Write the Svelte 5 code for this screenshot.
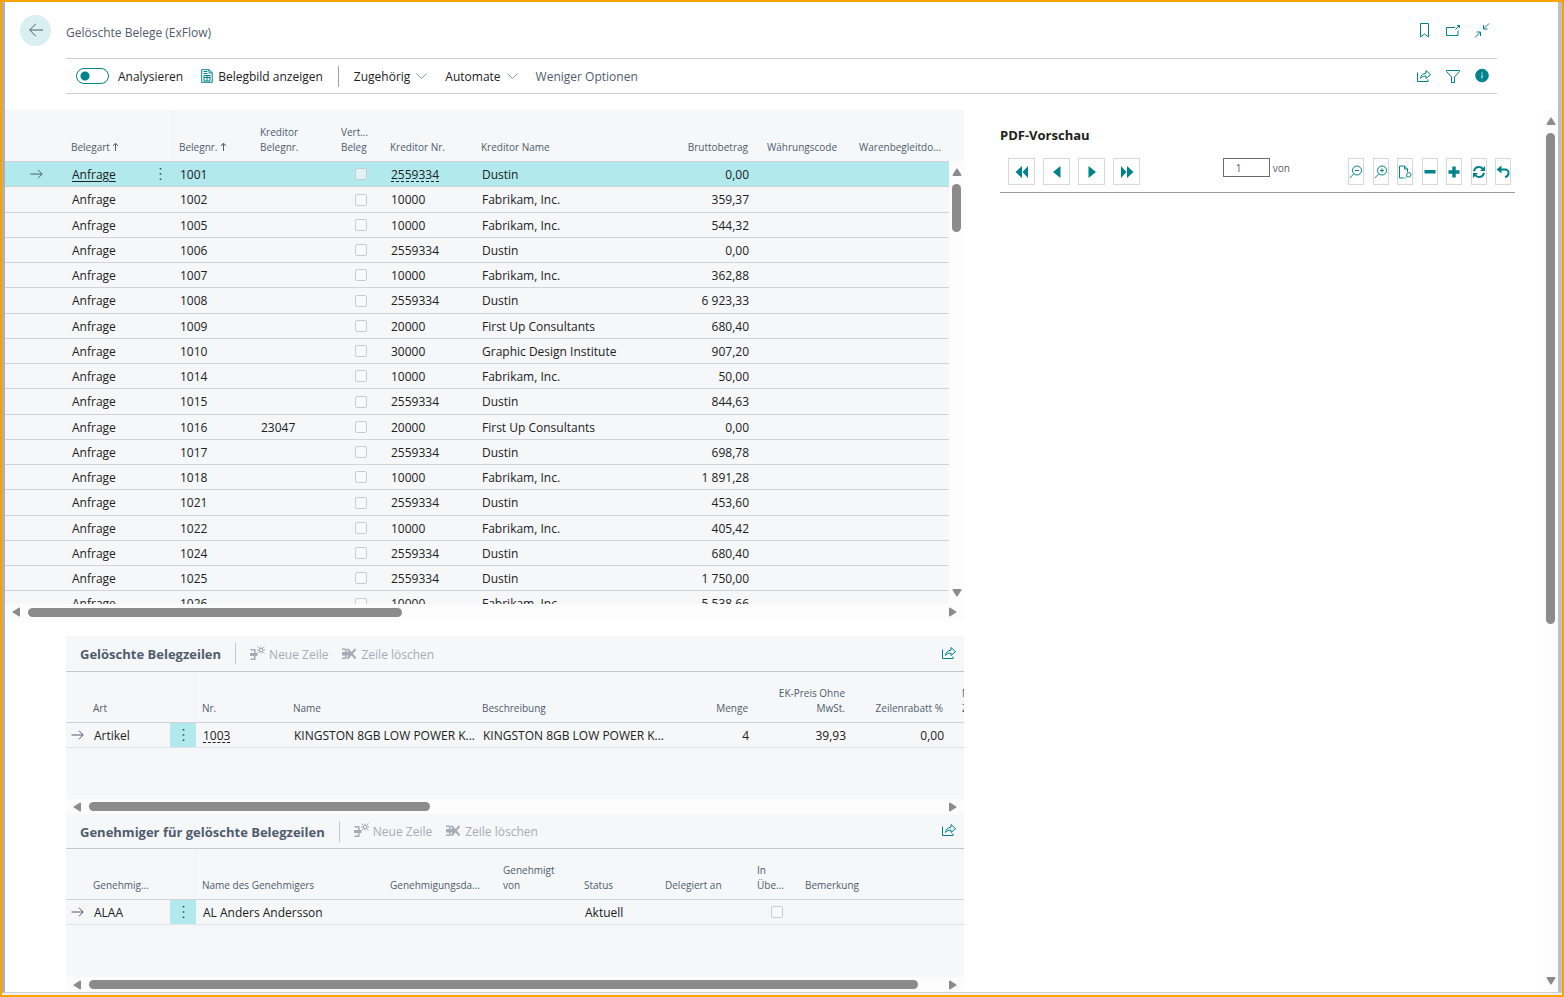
<script lang="ts">
  // Columns of the three lists. A width of 0 takes up the remaining space.
  const documentColumns = [
    { label: '', width: 60 },
    { label: 'Belegart', width: 82, sorted: true },
    { label: '', width: 26 },
    { label: 'Belegnr.', width: 81, sorted: true },
    { label: 'Kreditor\nBelegnr.', width: 81 },
    { label: 'Vert...\nBeleg', width: 49 },
    { label: 'Kreditor Nr.', width: 91 },
    { label: 'Kreditor Name', width: 190 },
    { label: 'Bruttobetrag', width: 96, right: true },
    { label: 'Währungscode', width: 92 },
    { label: 'Warenbegleitdo...', width: 0 }
  ];

  const lineColumns = [
    { label: '', width: 21 },
    { label: 'Art', width: 83 },
    { label: '', width: 26 },
    { label: 'Nr.', width: 91 },
    { label: 'Name', width: 189 },
    { label: 'Beschreibung', width: 189 },
    { label: 'Menge', width: 96, right: true },
    { label: 'EK-Preis Ohne\nMwSt.', width: 97, right: true },
    { label: 'Zeilenrabatt %', width: 98, right: true },
    { label: 'M\nZ', width: 0 }
  ];

  const approverColumns = [
    { label: '', width: 21 },
    { label: 'Genehmig...', width: 83 },
    { label: '', width: 26 },
    { label: 'Name des Genehmigers', width: 188 },
    { label: 'Genehmigungsda...', width: 113 },
    { label: 'Genehmigt\nvon', width: 81 },
    { label: 'Status', width: 81 },
    { label: 'Delegiert an', width: 92 },
    { label: 'In\nÜbe...', width: 48 },
    { label: 'Bemerkung', width: 0 }
  ];

  const documents = [
    { no: '1001', ref: '', vendor: '2559334', name: 'Dustin', amount: '0,00' },
    { no: '1002', ref: '', vendor: '10000', name: 'Fabrikam, Inc.', amount: '359,37' },
    { no: '1005', ref: '', vendor: '10000', name: 'Fabrikam, Inc.', amount: '544,32' },
    { no: '1006', ref: '', vendor: '2559334', name: 'Dustin', amount: '0,00' },
    { no: '1007', ref: '', vendor: '10000', name: 'Fabrikam, Inc.', amount: '362,88' },
    { no: '1008', ref: '', vendor: '2559334', name: 'Dustin', amount: '6 923,33' },
    { no: '1009', ref: '', vendor: '20000', name: 'First Up Consultants', amount: '680,40' },
    { no: '1010', ref: '', vendor: '30000', name: 'Graphic Design Institute', amount: '907,20' },
    { no: '1014', ref: '', vendor: '10000', name: 'Fabrikam, Inc.', amount: '50,00' },
    { no: '1015', ref: '', vendor: '2559334', name: 'Dustin', amount: '844,63' },
    { no: '1016', ref: '23047', vendor: '20000', name: 'First Up Consultants', amount: '0,00' },
    { no: '1017', ref: '', vendor: '2559334', name: 'Dustin', amount: '698,78' },
    { no: '1018', ref: '', vendor: '10000', name: 'Fabrikam, Inc.', amount: '1 891,28' },
    { no: '1021', ref: '', vendor: '2559334', name: 'Dustin', amount: '453,60' },
    { no: '1022', ref: '', vendor: '10000', name: 'Fabrikam, Inc.', amount: '405,42' },
    { no: '1024', ref: '', vendor: '2559334', name: 'Dustin', amount: '680,40' },
    { no: '1025', ref: '', vendor: '2559334', name: 'Dustin', amount: '1 750,00' },
    { no: '1026', ref: '', vendor: '10000', name: 'Fabrikam, Inc.', amount: '5 538,66' }
  ];

  let selected = 0;
  let analyse = false;
  let pageNumber = '1';
</script>

{#snippet columnHeads(columns)}
  <colgroup>
    {#each columns as col}
      <col style={col.width ? `width: ${col.width}px` : ''} />
    {/each}
  </colgroup>
  <thead>
    <tr>
      {#each columns as col}
        <th class:right={col.right}>{col.label}{#if col.sorted}<svg class="sort" viewBox="0 0 7 9" aria-hidden="true"><path d="M3.500 9V1.500M1 4l2.500-2.800L6 4" /></svg>{/if}</th>
      {/each}
    </tr>
  </thead>
{/snippet}

{#snippet arrowRight()}
  <svg class="row-arrow" viewBox="0 0 13 10" aria-hidden="true"><path d="M.5 5h11.500M8 .8L12.200 5 8 9.200" /></svg>
{/snippet}

{#snippet dots()}
  <button class="dots" aria-label="Weitere Optionen">
    <svg viewBox="0 0 3 14" aria-hidden="true"><path d="M.7 1h1.600v1.600H.7zM.7 6.200h1.600v1.600H.7zM.7 11.400h1.600V13H.7z" /></svg>
  </button>
{/snippet}

{#snippet shareIcon()}
  <svg class="icon" viewBox="0 0 16 16" aria-hidden="true">
    <path d="M1.500 4.500v9h10.500v-2M4.500 10.500c.3-3 2-5 5.500-5.300V2.500l4.500 4.200L10 10.500V8C7.500 8 5.800 8.800 4.500 10.500z" />
  </svg>
{/snippet}

{#snippet hScroll(thumb)}
  <div class="scrollbar">
    <svg class="tri" viewBox="0 0 8 10"><path d="M7 .5Q8 .3 8 1.500v7q0 1.200-1 1L.8 5.600Q.2 5 .8 4.400z" /></svg>
    <div class="track"><div class="thumb" style="width: {thumb}%"></div></div>
    <svg class="tri" viewBox="0 0 8 10"><path d="M1 .5Q0 .3 0 1.500v7q0 1.200 1 1l6.200-3.900q.6-.6 0-1.200z" /></svg>
  </div>
{/snippet}

{#snippet vScroll(thumb)}
  <div class="scrollbar vertical">
    <svg class="tri" viewBox="0 0 10 8"><path d="M.5 7Q.3 8 1.500 8h7q1.200 0 1-1L5.600.8Q5 .2 4.400.8z" /></svg>
    <div class="track"><div class="thumb" style="height: {thumb}%"></div></div>
    <svg class="tri" viewBox="0 0 10 8"><path d="M.5 1Q.3 0 1.500 0h7q1.200 0 1 1L5.600 7.200q-.6.6-1.200 0z" /></svg>
  </div>
{/snippet}

{#snippet partHeader(title)}
  <div class="part-header">
    <h2>{title}</h2>
    <span class="divider"></span>
    <button class="action" disabled>
      <svg class="line-icon" viewBox="0 0 16 16" aria-hidden="true">
        <path class="solid" d="M1 7h7.500v3H1zM1.500 3h3.500v1.500H1.500zM1.500 12.500H5V14H1.500zM5 3h1.500v11H5z" />
        <path d="M10.500 2.500h3v3h-3zM8.500.5l2 2M15.500.5l-2 2M8.500 7.500l2-2M15.500 7.500l-2-2M12 .5v2M12 5.500v2M8 4h2.500M13.500 4H16" />
      </svg>
      Neue Zeile
    </button>
    <button class="action" disabled>
      <svg class="line-icon" viewBox="0 0 16 16" aria-hidden="true">
        <path class="solid" d="M1 6h8v3.500H1zM1 2.500h4V4H1zM1 11.500h4V13H1zM4 2.500h1.500V13H4z" />
        <path class="cross" d="M6.500 3l8 9.500M14.500 3l-8 9.500" />
      </svg>
      Zeile löschen
    </button>
    <button class="icon-button" aria-label="Freigeben">{@render shareIcon()}</button>
  </div>
{/snippet}

<div class="frame">
  <div class="window">
    <header>
      <div class="title-row">
        <button class="back" aria-label="Zurück">
          <svg viewBox="0 0 14 14" aria-hidden="true"><path d="M14 7H.8M6.800.8L.7 7l6.100 6.200" /></svg>
        </button>
        <h1>Gelöschte Belege (ExFlow)</h1>
        <div class="icons">
          <button class="icon-button" aria-label="Lesezeichen">
            <svg class="icon" viewBox="0 0 16 16" aria-hidden="true"><path d="M4.500 1.500h8v13.500L8.500 12l-4 3z" /></svg>
          </button>
          <button class="icon-button" aria-label="In neuem Fenster öffnen">
            <svg class="icon" viewBox="0 0 16 16" aria-hidden="true"><path d="M10 5.500H1.500v8h11.500V8.500M10.500 7.500l4-4M12 3.500h2.500V6" /></svg>
          </button>
          <button class="icon-button" aria-label="Minimieren">
            <svg class="icon" viewBox="0 0 16 16" aria-hidden="true"><path d="M1 15.500l5.500-5.500M2.500 10h4v4M15 1.500L9.500 7M9.500 3v4h4" /></svg>
          </button>
        </div>
      </div>

      <div class="toolbar">
        <label class="switch">
          <input type="checkbox" role="switch" bind:checked={analyse} />
          Analysieren
        </label>
        <button class="action image">
          <svg class="doc" viewBox="0 0 12 14" aria-hidden="true">
            <path d="M.7.7h7.500l3 3v9.600H.7zM8 .7v3.200h3.200M2.500 2.500h4M2.500 4.500h4M3 6.500h6v5.500H3zM6 6.500V12M3 8.500h6" />
          </svg>
          Belegbild anzeigen
        </button>
        <span class="divider"></span>
        <button class="action menu">
          Zugehörig
          <svg class="chevron" viewBox="0 0 11 6" aria-hidden="true"><path d="M.5.5l5 5 5-5" /></svg>
        </button>
        <button class="action menu">
          Automate
          <svg class="chevron" viewBox="0 0 11 6" aria-hidden="true"><path d="M.5.5l5 5 5-5" /></svg>
        </button>
        <button class="action less">Weniger Optionen</button>
        <div class="icons">
          <button class="icon-button" aria-label="Freigeben">{@render shareIcon()}</button>
          <button class="icon-button" aria-label="Filter">
            <svg class="icon" viewBox="0 0 16 16" aria-hidden="true"><path d="M1.500 2.500h13v1L9.500 9v5.500h-3V9l-5-5.500z" /></svg>
          </button>
          <button class="icon-button" aria-label="Infobox">
            <svg class="icon" viewBox="0 0 16 16" aria-hidden="true">
              <circle class="solid" cx="8" cy="7.500" r="6.300" />
              <path class="info" d="M8 4.500v1.200M8 6.500v4" />
            </svg>
          </button>
        </div>
      </div>
    </header>

    <main>
      <div class="lists">
        <section class="documents">
          <div class="viewport">
            <div class="rows">
              <table>
                {@render columnHeads(documentColumns)}
                <tbody>
                  {#each documents as doc, index}
                    <tr class:selected={index === selected} on:click={() => (selected = index)}>
                      <td class="marker">{#if index === selected}{@render arrowRight()}{/if}</td>
                      <td>{#if index === selected}<a class="solid-link" href="#{doc.no}">Anfrage</a>{:else}Anfrage{/if}</td>
                      <td class="dots-cell">{#if index === selected}{@render dots()}{/if}</td>
                      <td>{doc.no}</td>
                      <td>{doc.ref}</td>
                      <td class="check"><input type="checkbox" disabled aria-label="Vertraulicher Beleg {doc.no}" /></td>
                      <td>{#if index === selected}<a href="#{doc.vendor}">{doc.vendor}</a>{:else}{doc.vendor}{/if}</td>
                      <td>{doc.name}</td>
                      <td class="right">{doc.amount}</td>
                      <td></td>
                      <td></td>
                    </tr>
                  {/each}
                </tbody>
              </table>
            </div>
            {@render vScroll(12)}
          </div>
          {@render hScroll(41)}
        </section>

        <section class="part lines">
          {@render partHeader('Gelöschte Belegzeilen')}
          <div class="part-body">
            <table>
              {@render columnHeads(lineColumns)}
              <tbody>
                <tr>
                  <td class="marker">{@render arrowRight()}</td>
                  <td>Artikel</td>
                  <td class="dots-cell filled">{@render dots()}</td>
                  <td><a href="#1003">1003</a></td>
                  <td>KINGSTON 8GB LOW POWER K...</td>
                  <td>KINGSTON 8GB LOW POWER K...</td>
                  <td class="right">4</td>
                  <td class="right">39,93</td>
                  <td class="right">0,00</td>
                  <td></td>
                </tr>
              </tbody>
            </table>
          </div>
          {@render hScroll(40)}
        </section>

        <section class="part approvers">
          {@render partHeader('Genehmiger für gelöschte Belegzeilen')}
          <div class="part-body">
            <table>
              {@render columnHeads(approverColumns)}
              <tbody>
                <tr>
                  <td class="marker">{@render arrowRight()}</td>
                  <td>ALAA</td>
                  <td class="dots-cell filled">{@render dots()}</td>
                  <td>AL Anders Andersson</td>
                  <td></td>
                  <td></td>
                  <td>Aktuell</td>
                  <td></td>
                  <td class="check"><input type="checkbox" disabled aria-label="In Überprüfung" /></td>
                  <td></td>
                </tr>
              </tbody>
            </table>
          </div>
          {@render hScroll(97.3)}
        </section>
      </div>

      <aside>
        <h2>PDF-Vorschau</h2>
        <div class="pdf-bar">
          <div class="pager">
            <button aria-label="Erste Seite"><svg viewBox="0 0 14 12"><path d="M7 0v12L.5 6zM13 0v12L7.500 6z" /></svg></button>
            <button aria-label="Vorherige Seite"><svg viewBox="0 0 14 12"><path d="M10.500 0v12L3 6z" /></svg></button>
            <button aria-label="Nächste Seite"><svg viewBox="0 0 14 12"><path d="M3.500 0v12L11 6z" /></svg></button>
            <button aria-label="Letzte Seite"><svg viewBox="0 0 14 12"><path d="M1 0v12L6.500 6zM7 0v12l6.500-6z" /></svg></button>
          </div>
          <label class="page-input"><input type="text" bind:value={pageNumber} aria-label="Seite" />von</label>
          <div class="tools">
            <button aria-label="Verkleinern"><svg class="line" viewBox="0 0 14 14"><circle cx="8" cy="5.500" r="4.500" /><path d="M4.800 8.800L.8 13M6 5.500h4" /></svg></button>
            <button aria-label="Vergrößern"><svg class="line" viewBox="0 0 14 14"><circle cx="8" cy="5.500" r="4.500" /><path d="M4.800 8.800L.8 13M6 5.500h4M8 3.500v4" /></svg></button>
            <button aria-label="Seite anpassen"><svg class="line" viewBox="0 0 14 14"><path d="M6 13H1.500V1h5l3 3v3M6.500 1v3h3M9 11.500l-2 2" /><circle cx="10.800" cy="9.800" r="2.200" /></svg></button>
            <button aria-label="Schmaler"><svg viewBox="0 0 14 14"><path d="M1.500 5h11v3.500h-11z" /></svg></button>
            <button aria-label="Breiter"><svg viewBox="0 0 14 14"><path d="M5.300 1.500h3.400v3.800h3.800v3.400H8.700v3.800H5.300V8.700H1.500V5.300h3.800z" /></svg></button>
            <button aria-label="Aktualisieren"><svg class="bold" viewBox="0 0 14 14"><path d="M2 6.200C2.500 3.500 4.600 2 7 2c1.600 0 3 .7 4 2M12 7.800C11.500 10.500 9.400 12 7 12c-1.600 0-3-.7-4-2" /><path class="fill" d="M13 1v5H8zM1 13V8h5z" /></svg></button>
            <button aria-label="Zurücksetzen"><svg class="bold" viewBox="0 0 14 14"><path d="M3 4.500h6c5 0 4.500 7 0 7.500" /><path class="fill" d="M5.500.5v8L.5 4.500z" /></svg></button>
          </div>
        </div>
      </aside>

      {@render vScroll(58.7)}
    </main>
  </div>
</div>

<style>
  :global(body) {
    margin: 0;
    background: #fff;
  }

  .frame {
    box-sizing: border-box;
    min-height: 100vh;
    border: 2px solid #f7a400;
    background: #f0f0f0;
    padding-bottom: 2px;
    font-family: 'Open Sans', 'Noto Sans', sans-serif;
    font-size: 12px;
    line-height: 16px;
    color: #212121;
  }

  .window {
    border-left: 3px solid #b0b0b0;
    border-right: 4px solid #c0c0c0;
    border-bottom: 1px solid #d0d0d0;
    background: #fff;
  }

  button {
    margin: 0;
    padding: 0;
    border: none;
    background: none;
    font: inherit;
    color: inherit;
    cursor: pointer;
  }

  svg {
    display: block;
    fill: none;
    stroke: currentColor;
  }

  h1,
  h2 {
    margin: 0;
    font-size: 12px;
    font-weight: 400;
  }

  h2 {
    font-size: 13px;
    font-weight: 700;
  }

  /* Header */
  header {
    padding: 0 61px;
  }

  .title-row {
    display: flex;
    align-items: center;
    height: 56px;
  }

  .back {
    display: flex;
    align-items: center;
    justify-content: center;
    width: 31px;
    height: 31px;
    margin: 0 15px 0 -46px;
    border-radius: 50%;
    background: #d9f0f2;
    color: #505c6d;
  }

  .back svg {
    width: 14px;
    height: 14px;
  }

  h1 {
    padding-top: 6px;
    color: #505c6d;
  }

  .icons {
    display: flex;
    gap: 13px;
    margin-left: auto;
    padding-right: 7px;
  }

  .icon-button {
    color: #00838a;
  }

  .icon {
    width: 16px;
    height: 16px;
  }

  .icon .solid {
    fill: #00838a;
  }

  .icon .info {
    stroke: #fff;
  }

  .toolbar {
    display: flex;
    align-items: center;
    height: 34px;
    padding-left: 10px;
    border-top: 1px solid #d0d0d4;
    border-bottom: 1px solid #d0d0d4;
  }

  .switch {
    display: flex;
    align-items: center;
    gap: 9px;
    margin-right: 18px;
    padding-top: 2px;
  }

  .switch input {
    appearance: none;
    box-sizing: border-box;
    width: 33px;
    height: 16px;
    margin: 0 0 2px;
    border: 1px solid #00838a;
    border-radius: 8px;
    background: radial-gradient(circle at 8px 7px, #00838a 4px, transparent 5px);
  }

  .switch input:checked {
    background: radial-gradient(circle at 23px 7px, #00838a 4px, transparent 5px);
  }

  .action {
    display: flex;
    align-items: center;
    gap: 6px;
    padding-top: 2px;
  }

  .action svg {
    margin-bottom: 2px;
  }

  .image {
    gap: 5px;
  }

  .action:disabled {
    gap: 4px;
    color: #a6acb5;
    cursor: default;
  }

  .menu {
    margin-right: 18px;
  }

  .less {
    color: #505c6d;
  }

  .doc {
    width: 12px;
    height: 14px;
    color: #00838a;
  }

  .chevron {
    width: 11px;
    height: 6px;
    color: #8a929c;
  }

  .divider {
    width: 1px;
    height: 21px;
    margin: 0 15px;
    background: #9ba3b0;
  }

  /* Lists */
  main {
    display: grid;
    grid-template-columns: minmax(0, 959fr) minmax(0, 579fr) 15px;
    margin-top: 16px;
  }

  .documents {
    margin-bottom: 16px;
  }

  .viewport {
    display: flex;
    height: 494px;
    overflow: hidden;
    background: #f5f7f9;
  }

  .rows {
    flex: 1;
    min-width: 0;
  }

  .viewport .scrollbar {
    margin-top: 51px;
  }

  table {
    width: 100%;
    table-layout: fixed;
    border-collapse: separate;
    border-spacing: 0;
  }

  th,
  td {
    box-sizing: border-box;
    overflow: hidden;
    padding: 1px 0 0 7px;
    text-align: left;
    white-space: pre;
    border-bottom: 1px solid #d0d3d8;
  }

  th {
    height: 52px;
    padding: 0 0 6px 6px;
    font-size: 10px;
    font-weight: 400;
    line-height: 15px;
    color: #505c6d;
    vertical-align: bottom;
  }

  td {
    height: 25px;
    line-height: 16px;
  }

  tr:nth-child(4n + 2) td {
    height: 26px;
  }

  th:nth-child(3) {
    border-right: 1px solid #eef0f3;
  }

  th.right {
    padding-right: 13px;
    text-align: right;
  }

  td.right {
    padding-right: 12px;
    text-align: right;
  }

  .sort {
    display: inline-block;
    width: 7px;
    height: 9px;
    margin-left: 2px;
  }

  .selected td {
    background: #b1e9ec;
  }

  .marker {
    padding: 0 0 0 5px;
  }

  .documents .marker {
    padding-left: 25px;
  }

  .row-arrow {
    width: 13px;
    height: 10px;
    color: #505c6d;
  }

  .dots-cell {
    padding: 0;
  }

  .filled {
    background: #b1e9ec;
  }

  .dots {
    display: block;
    margin: 0 auto;
  }

  .dots svg {
    width: 3px;
    height: 14px;
    fill: #33505a;
    stroke: none;
  }

  td a {
    color: inherit;
    text-decoration: underline dashed 1px;
    text-underline-offset: 2px;
  }

  td .solid-link {
    text-decoration-style: solid;
  }

  .check {
    padding: 0 0 0 20px;
  }

  .check input {
    appearance: none;
    display: block;
    box-sizing: border-box;
    width: 12px;
    height: 12px;
    margin: 0;
    border: 1px solid #c9ccd0;
    border-radius: 2px;
    background: rgba(250, 250, 250, 0.6);
  }

  .part {
    margin-left: 61px;
    background: #f5f7f9;
  }

  .part-header {
    display: flex;
    align-items: center;
    height: 35px;
    padding: 0 7px 0 14px;
    border-bottom: 1px solid #c4c8ce;
  }

  .approvers .part-header {
    height: 34px;
  }

  .part-header h2 {
    padding-top: 1px;
    color: #505c6d;
  }

  .part-header .divider {
    margin: 0 13px 0 14px;
    background: #c4c8ce;
  }

  .part-header .action {
    margin-right: 13px;
  }

  .part-header .icon-button {
    margin: 0 0 2px auto;
  }

  .line-icon {
    width: 16px;
    height: 16px;
  }

  .line-icon .solid {
    fill: currentColor;
    stroke: none;
  }

  .line-icon .cross {
    stroke-width: 2;
  }

  .part-body {
    height: 128px;
  }

  .lines .part-body {
    height: 127px;
  }

  .part-body th {
    height: 51px;
  }

  .part-body td {
    padding-top: 2px;
    border-bottom-color: #e0e3e7;
  }

  .part-body .marker,
  .part-body .dots-cell,
  .part-body .check {
    padding-top: 0;
  }

  /* Scrollbars */
  .scrollbar {
    display: flex;
    align-items: center;
    gap: 8px;
    height: 15px;
    padding: 0 7px;
    background: #fcfcfc;
  }

  .documents > .scrollbar {
    height: 16px;
  }

  .track {
    flex: 1;
  }

  .thumb {
    height: 9px;
    border-radius: 5px;
    background: #8b8b8b;
  }

  .tri {
    width: 8px;
    height: 10px;
    fill: #8b8b8b;
    stroke: none;
  }

  .vertical {
    flex-direction: column;
    width: 15px;
    height: auto;
    padding: 7px 0;
  }

  .vertical .tri {
    width: 10px;
    height: 8px;
  }

  .vertical .thumb {
    width: 9px;
  }

  /* PDF preview */
  aside {
    padding: 17px 28px 0 36px;
  }

  aside h2 {
    color: #212121;
  }

  .pdf-bar {
    display: flex;
    align-items: flex-start;
    height: 34px;
    margin-top: 15px;
    padding: 0 4px 0 8px;
    border-bottom: 1px solid #999;
    color: #00838a;
  }

  .pager {
    display: flex;
    gap: 8px;
  }

  .pager button,
  .tools button {
    display: flex;
    align-items: center;
    justify-content: center;
    box-sizing: border-box;
    width: 27px;
    height: 27px;
    border: 1px solid #d8d8d8;
  }

  .pdf-bar svg {
    flex: none;
    width: 14px;
    height: 12px;
    fill: currentColor;
    stroke: none;
  }

  .page-input {
    display: flex;
    align-items: center;
    gap: 3px;
    margin-left: auto;
    font-size: 10px;
    color: #505c6d;
  }

  .page-input input {
    box-sizing: border-box;
    width: 47px;
    height: 19px;
    padding: 0 12px;
    border: 1px solid #6b6b6b;
    font: inherit;
    color: #505c6d;
  }

  .tools {
    display: flex;
    justify-content: space-between;
    width: 163px;
    margin-left: 58px;
  }

  .tools button {
    width: 16px;
  }

  .pdf-bar .tools svg {
    width: 14px;
    height: 14px;
  }

  .pdf-bar .line,
  .pdf-bar .bold {
    fill: none;
    stroke: currentColor;
  }

  .pdf-bar .bold {
    stroke-width: 2;
  }

  .bold .fill {
    fill: currentColor;
    stroke: none;
  }
</style>
